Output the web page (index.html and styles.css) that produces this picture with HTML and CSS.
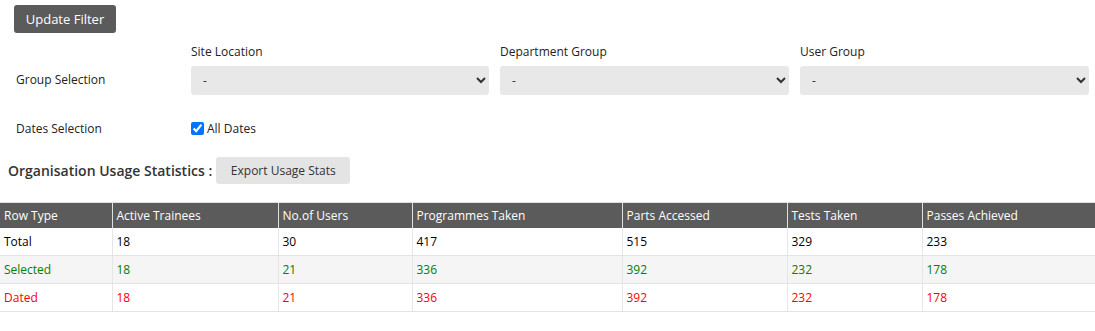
FILE: index.html
```html
<!DOCTYPE html>
<html>
<head>
    <title>Usage Statistics</title>
    <meta charset="UTF-8">
    <link rel="stylesheet" href="styles.css">
</head>
<body>
    <div class="toolbar">
        <button type="button" class="btn-dark">Update Filter</button>
    </div>

    <form class="filters">
        <div class="filter-label"></div>
        <div class="filter-head">Site Location</div>
        <div class="filter-head">Department Group</div>
        <div class="filter-head">User Group</div>

        <div class="filter-label group-label">Group Selection</div>
        <select class="filter-select"><option>-</option></select>
        <select class="filter-select"><option>-</option></select>
        <select class="filter-select"><option>-</option></select>

        <div class="filter-label dates-label">Dates Selection</div>
        <label class="dates-check"><input type="checkbox" checked> All Dates</label>
    </form>

    <div class="stats-head">
        <h2>Organisation Usage Statistics :</h2>
        <button type="button" class="btn-light">Export Usage Stats</button>
    </div>

    <table class="stats">
        <colgroup>
            <col style="width:112px"><col style="width:166px"><col style="width:134px">
            <col style="width:210px"><col style="width:165px"><col style="width:135px"><col>
        </colgroup>
        <thead>
            <tr>
                <th>Row Type</th>
                <th>Active Trainees</th>
                <th>No.of Users</th>
                <th>Programmes Taken</th>
                <th>Parts Accessed</th>
                <th>Tests Taken</th>
                <th>Passes Achieved</th>
            </tr>
        </thead>
        <tbody>
            <tr class="row-total">
                <td>Total</td><td>18</td><td>30</td><td>417</td><td>515</td><td>329</td><td>233</td>
            </tr>
            <tr class="row-selected">
                <td>Selected</td><td>18</td><td>21</td><td>336</td><td>392</td><td>232</td><td>178</td>
            </tr>
            <tr class="row-dated">
                <td>Dated</td><td>18</td><td>21</td><td>336</td><td>392</td><td>232</td><td>178</td>
            </tr>
        </tbody>
    </table>
</body>
</html>
```

FILE: styles.css
```css
body {
    margin: 0;
    font-family: "Open Sans", Arial, sans-serif;
    font-size: 12px;
    color: #222;
    background: #fff;
}
button, select, input {
    font-family: "Open Sans", Arial, sans-serif;
}
.toolbar {
    padding: 5px 0 0 14px;
    height: 28px;
}
.btn-dark {
    width: 102px;
    height: 28px;
    border: none;
    border-radius: 3px;
    background: #5b5b5b;
    color: #fff;
    font-size: 13px;
    padding: 0;
}
.filters {
    display: grid;
    grid-template-columns: 164px 298px 289px 289px;
    column-gap: 11px;
    padding-left: 16px;
    margin-top: 10px;
}
.filter-head {
    height: 23px;
    line-height: 18px;
    font-size: 12px;
    color: #222;
}
.filter-label {
    display: flex;
    align-items: center;
}
.group-label {
    padding-bottom: 3px;
}
.filter-select {
    height: 29px;
    border: none;
    border-radius: 3px;
    background: #e8e8e8;
    color: #333;
    font-size: 12px;
    padding: 0 8px;
}
.dates-label {
    height: 22px;
    margin-top: 22px;
}
.dates-check {
    margin-top: 22px;
    display: flex;
    align-items: center;
    height: 22px;
    font-size: 12px;
}
.dates-check input {
    margin: 0 3px 0 0;
    width: 13px;
    height: 13px;
}
.stats-head {
    display: flex;
    align-items: center;
    padding-left: 8px;
    margin-top: 18px;
}
.stats-head h2 {
    margin: 0 4px 0 0;
    font-size: 14px;
    font-weight: 600;
    color: #333;
}
.btn-light {
    width: 134px;
    height: 27px;
    border: none;
    border-radius: 3px;
    background: #e4e4e4;
    color: #333;
    font-size: 12px;
    padding: 0;
}
.stats {
    width: 100%;
    margin-top: 18px;
    border-collapse: collapse;
    table-layout: fixed;
    border-top: 1px solid #e0e0e0;
}
.stats th {
    background: #5b5b5b;
    color: #fff;
    font-weight: normal;
    text-align: left;
    height: 25px;
    padding: 0 4px;
    border-left: 1px solid #e0e0e0;
}
.stats th:first-child, .stats td:first-child {
    border-left: none;
}
.stats td {
    height: 27px;
    padding: 0 4px;
    border-left: 1px solid #e6e6e6;
    border-bottom: 1px solid #e3e3e3;
}
.row-total td {
    color: #000;
}
.row-selected td {
    background: #f5f5f5;
    color: #008000;
}
.row-dated td {
    color: #ff0000;
}
```
